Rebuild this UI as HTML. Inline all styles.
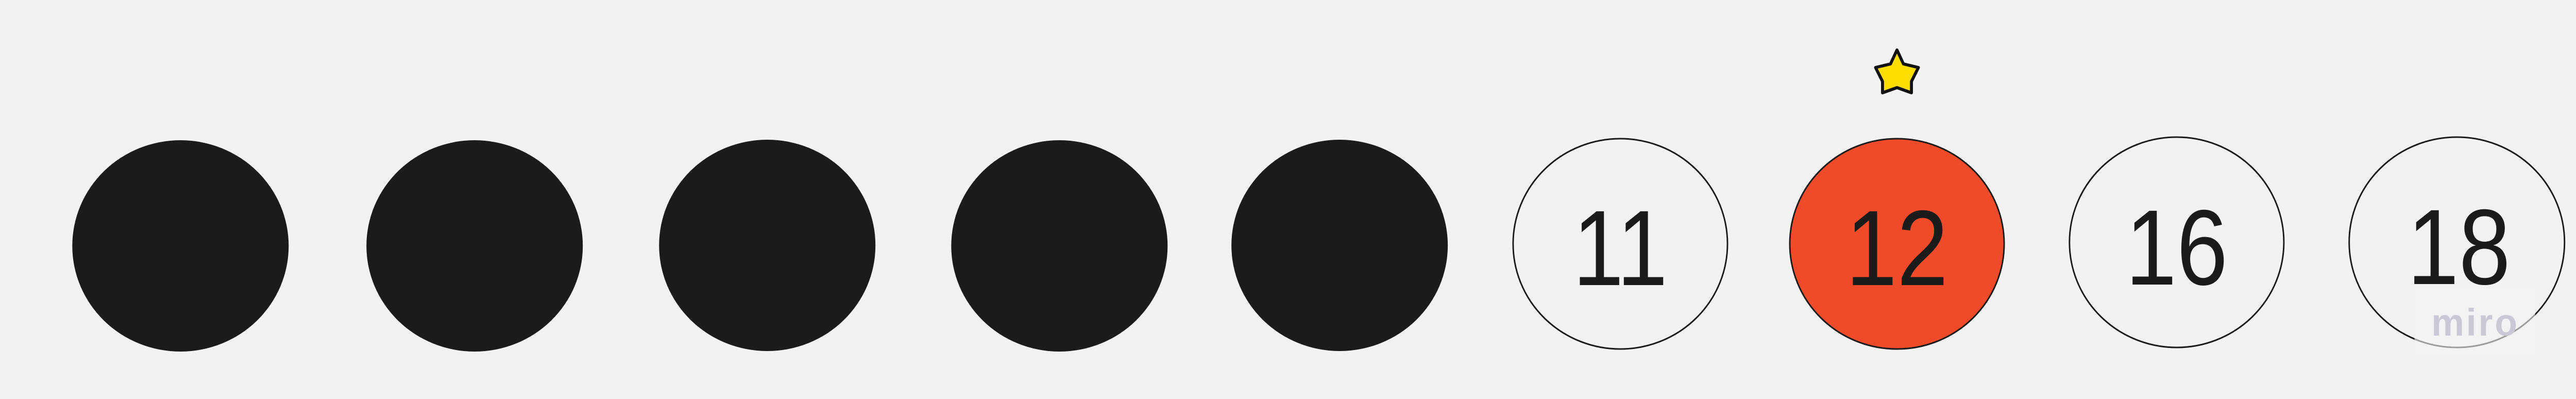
<!DOCTYPE html>
<html><head><meta charset="utf-8"><style>
html,body{margin:0;padding:0;background:#f2f2f2;width:100%;height:100%;overflow:hidden;}
svg{display:block;width:100vw;height:100vh}
</style></head><body>
<svg viewBox="0 0 5167 774" preserveAspectRatio="none" xmlns="http://www.w3.org/2000/svg">
<rect width="5167" height="774" fill="#f2f2f2"/>
<g fill="#1b1b1b">
<ellipse cx="362" cy="477" rx="217" ry="205"/>
<ellipse cx="952" cy="477" rx="217" ry="205"/>
<ellipse cx="1539" cy="476" rx="217" ry="205"/>
<ellipse cx="2125" cy="477" rx="217" ry="205"/>
<ellipse cx="2687" cy="476" rx="217" ry="205"/>
</g>
<g stroke="#1b1b1b" stroke-width="3">
<ellipse cx="3250" cy="473" rx="215" ry="204" fill="#f2f2f2"/>
<ellipse cx="3805" cy="473" rx="215" ry="204" fill="#ef4a2a"/>
<ellipse cx="4366" cy="470" rx="215" ry="204" fill="#f2f2f2"/>
<ellipse cx="4928" cy="470" rx="216" ry="204" fill="#f2f2f2"/>
</g>
<g font-family="'Liberation Sans',sans-serif" font-size="208" fill="#1b1b1b" text-anchor="middle">
<text x="3250" y="553" textLength="190" lengthAdjust="spacingAndGlyphs">11</text>
<text x="3805" y="553" textLength="205" lengthAdjust="spacingAndGlyphs">12</text>
<text x="4366" y="552" textLength="205" lengthAdjust="spacingAndGlyphs">16</text>
<text x="4932" y="551" textLength="207" lengthAdjust="spacingAndGlyphs">18</text>
</g>
<path d="M3805 97 L3818 124 L3848 131 L3834 158 L3834 180 L3805 170 L3776 180 L3776 158 L3762 131 L3792 124 Z" fill="#ffdd00" stroke="#111" stroke-width="6" stroke-linejoin="round"/>
<rect x="4843" y="561" width="242" height="128" fill="#f3f3f3" opacity="0.6"/>
<text x="4965" y="651" font-family="'Liberation Sans',sans-serif" font-weight="bold" font-size="74" fill="#c8c8d6" text-anchor="middle" letter-spacing="4">miro</text>
</svg>
</body></html>
